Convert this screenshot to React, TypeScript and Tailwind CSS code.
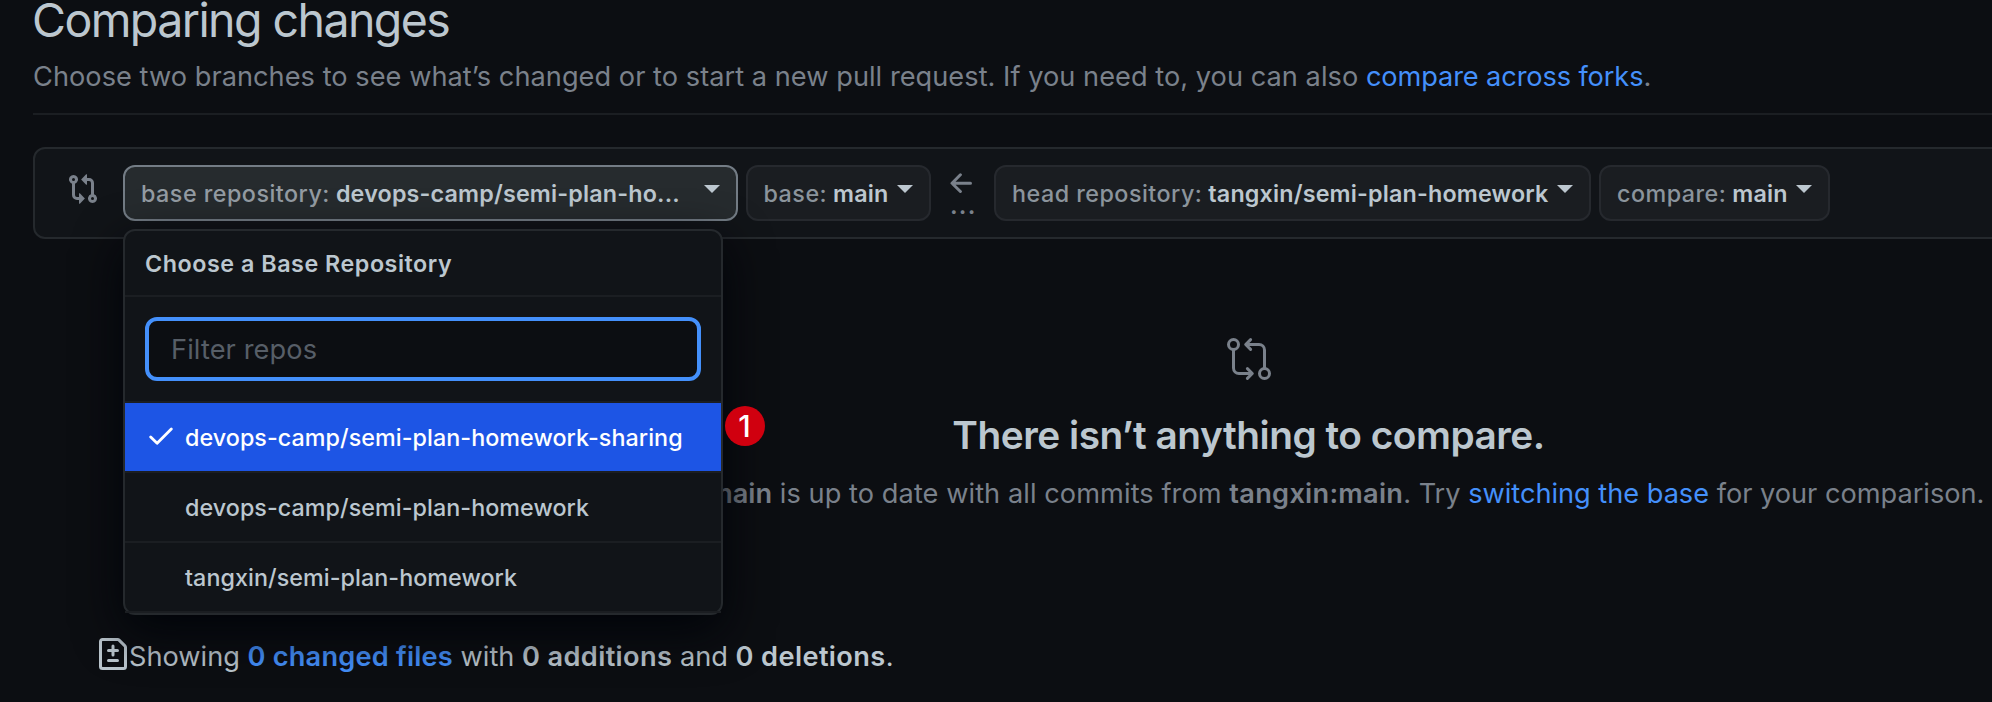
import React from "react";

type IconProps = { className?: string };

const CompareSmallIcon = ({ className }: IconProps) => (
  <svg viewBox="0 0 16 16" fill="currentColor" className={className}>
    <path d="M9.573.677A.25.25 0 0 1 10 .854V2.5h1A2.5 2.5 0 0 1 13.5 5v5.628a2.251 2.251 0 1 1-1.5 0V5a1 1 0 0 0-1-1h-1v1.646a.25.25 0 0 1-.427.177L7.177 3.427a.25.25 0 0 1 0-.354L9.573.677ZM6 12v-1.646a.25.25 0 0 1 .427-.177l2.396 2.396a.25.25 0 0 1 0 .354l-2.396 2.396A.25.25 0 0 1 6 15.146V13.5H5A2.5 2.5 0 0 1 2.5 11V5.372a2.25 2.25 0 1 1 1.5 0V11a1 1 0 0 0 1 1h1ZM4 3.25a.75.75 0 1 0-1.5 0 .75.75 0 0 0 1.5 0Zm9.5 9.5a.75.75 0 1 0-1.5 0 .75.75 0 0 0 1.5 0Z" />
  </svg>
);

const CompareLargeIcon = ({ className }: IconProps) => (
  <svg
    viewBox="0 0 24 24"
    fill="none"
    stroke="currentColor"
    strokeWidth="1.5"
    strokeLinecap="round"
    strokeLinejoin="round"
    className={className}
  >
    <circle cx="4.25" cy="4.75" r="2.5" />
    <circle cx="19.75" cy="19.25" r="2.5" />
    <path d="M4.25 7.25V16.5a2.75 2.75 0 0 0 2.75 2.75h6.3M11.2 16.8l2.45 2.45-2.45 2.45" />
    <path d="M19.75 16.75V7.5A2.75 2.75 0 0 0 17 4.75h-6.3M12.8 2.3l-2.45 2.45 2.45 2.45" />
  </svg>
);

const FileDiffIcon = ({ className }: IconProps) => (
  <svg viewBox="0 0 16 16" fill="currentColor" className={className}>
    <path d="M1 1.75C1 .784 1.784 0 2.75 0h7.586c.464 0 .909.184 1.237.513l2.914 2.914c.329.328.513.773.513 1.237v9.586A1.75 1.75 0 0 1 13.25 16H2.75A1.75 1.75 0 0 1 1 14.25Zm1.75-.25a.25.25 0 0 0-.25.25v12.5c0 .138.112.25.25.25h10.5a.25.25 0 0 0 .25-.25V4.664a.25.25 0 0 0-.073-.177l-2.914-2.914a.25.25 0 0 0-.177-.073ZM8 3.25a.75.75 0 0 1 .75.75v1.5h1.5a.75.75 0 0 1 0 1.5h-1.5v1.5a.75.75 0 0 1-1.5 0V7h-1.5a.75.75 0 0 1 0-1.5h1.5V4A.75.75 0 0 1 8 3.25Zm-3 8a.75.75 0 0 1 .75-.75h4.5a.75.75 0 0 1 0 1.5h-4.5a.75.75 0 0 1-.75-.75Z" />
  </svg>
);

const CheckIcon = ({ className }: IconProps) => (
  <svg viewBox="0 0 24 18" fill="none" stroke="currentColor" strokeWidth="2.8" strokeLinecap="round" strokeLinejoin="round" className={className}>
    <path d="M1.7 9.9l6.4 6.3L22.3 1.9" />
  </svg>
);

const ArrowLeftIcon = ({ className }: IconProps) => (
  <svg viewBox="0 0 22 20" fill="none" stroke="currentColor" strokeWidth="3" strokeLinecap="round" strokeLinejoin="round" className={className}>
    <path d="M20.5 10.2H2.2M10.4 1.8L2 10.2l8.4 8.3" />
  </svg>
);

const Caret = () => (
  <svg viewBox="0 0 16 8" fill="currentColor" className="-mt-2 h-2 w-4 shrink-0 text-[#bcc7cf]">
    <path d="M0 0h16L8 8z" />
  </svg>
);

type PickerProps = {
  label: string;
  value: string;
  className: string;
  labelClass?: string;
};

const Picker = ({ label, value, className, labelClass = "text-[#8b949c]" }: PickerProps) => (
  <button
    type="button"
    className={`flex h-14 shrink-0 items-center justify-between rounded-xl border-2 px-4 text-[23.3px] leading-6 whitespace-nowrap ${className}`}
  >
    <span className="pt-px">
      <span className={`mr-[6px] font-medium tracking-[0.49px] ${labelClass}`}>{label}</span>
      <span className="font-semibold tracking-[0.17px] text-[#bcc7cf]">{value}</span>
    </span>
    <Caret />
  </button>
);

const idle = "border-[#26292e] bg-[#1a1d21]";

const repos = [
  { name: "devops-camp/semi-plan-homework-sharing", selected: true },
  { name: "devops-camp/semi-plan-homework", selected: false },
  { name: "tangxin/semi-plan-homework", selected: false },
];

const RepoMenu = () => (
  <div className="absolute top-[80px] left-[88px] z-10 w-[600px] rounded-xl border-2 border-[#25292d] bg-[#111418] shadow-[0_16px_48px_#010409]">
    <div className="flex h-[66px] items-center border-b-2 border-[#1b1e22] px-5 pt-0.5 text-[23.3px] font-semibold tracking-[0.53px] text-[#bcc7cf]">
      Choose a Base Repository
    </div>
    <div className="border-b-2 border-[#1b1e22] p-5">
      <input
        placeholder="Filter repos"
        className="block h-16 w-full rounded-xl border-4 border-[#4490fb] bg-[#0c0e12] pr-4 pl-[22px] text-[27.2px] tracking-[0.1px] outline-none placeholder:text-[#575e67]"
      />
    </div>
    {repos.map((repo) => (
      <div
        key={repo.name}
        className={`flex h-[70px] items-center border-b-2 border-[#1b1e22] bg-clip-padding text-[23.3px] font-medium tracking-[0.06px] last:rounded-b-[10px] ${
          repo.selected ? "bg-[#1d55e5] text-white" : "text-[#bcc7cf]"
        }`}
      >
        <span className="flex w-[60px] shrink-0 pl-6">
          {repo.selected && <CheckIcon className="-mt-0.5 h-[18px] w-6" />}
        </span>
        <span className="pt-0.5">{repo.name}</span>
      </div>
    ))}
    <span className="absolute top-[175px] left-[599.5px] flex size-10 items-center justify-center rounded-full bg-[#d0000f] text-[30px] leading-none font-medium text-white">
      1
    </span>
  </div>
);

export default function App() {
  return (
    <div className="h-[702px] w-full overflow-hidden bg-[#0c0e12] pl-[33px] font-[Inter,sans-serif] text-[27.2px] text-[#bcc7cf]">
      <div className="w-[2431px]">
        <header className="h-[115px] border-b-2 border-[#1b1e22]">
          <h1 className="-ml-px text-[46.5px] leading-10 tracking-[-1.57px]">Comparing changes</h1>
          <p className="leading-[74px] tracking-[0.03px] whitespace-nowrap text-[#7a818b]">
            Choose two branches to see what’s changed or to start a new pull request. If you need to, you can also{" "}
            <a className="tracking-[-0.12px] text-[#4490fb]">compare across forks</a>.
          </p>
        </header>

        <section className="relative mt-8 flex h-[92px] items-start rounded-xl border-2 border-[#25292d] bg-[#111418] pt-4 pl-8">
          <CompareSmallIcon className="mt-2 mr-6 size-8 shrink-0 text-[#7a818b]" />
          <Picker
            label="base repository:"
            value="devops-camp/semi-plan-ho..."
            className="w-[614.5px] border-[#737c85] bg-[#262b2e]"
            labelClass="text-[#949ca3]"
          />
          <Picker label="base:" value="main" className={`ml-2 w-[185.5px] ${idle}`} />
          <div className="flex w-[63px] shrink-0 flex-col pt-2 pl-[19px] text-[#7a818b]">
            <ArrowLeftIcon className="h-5 w-[22px]" />
            <span className="pt-px text-[24px] leading-6 font-semibold tracking-[1.2px]">...</span>
          </div>
          <Picker label="head repository:" value="tangxin/semi-plan-homework" className={`w-[597px] ${idle}`} />
          <Picker label="compare:" value="main" className={`ml-2 w-[231px] ${idle}`} />
          <RepoMenu />
        </section>

        <section className="flex flex-col items-center pt-24">
          <CompareLargeIcon className="size-12 text-[#7a818b]" />
          <h2 className="mt-[22px] text-[38.8px] leading-[60px] font-semibold tracking-[-0.49px]">
            There isn’t anything to compare.
          </h2>
          <p className="mt-2 pl-[5px] leading-[42px] tracking-[-0.02px] whitespace-nowrap text-[#7a818b]">
            <b className="font-semibold">devops-camp:main</b>
            <span className="tracking-[0.06px]"> is up to date with all commits from </span>
            <b className="font-semibold tracking-[0.26px]">tangxin:main</b>. Try{" "}
            <a className="text-[#4490fb]">switching the base</a> for your comparison.
          </p>
        </section>

        <section className="mt-[120px] flex items-start pl-16 leading-[42px] whitespace-nowrap">
          <FileDiffIcon className="mt-[3px] size-8 shrink-0" />
          <span className="pt-px">
            Showing <b className="font-semibold tracking-[0.2px] text-[#4490fb]">0 changed files</b> with{" "}
            <b className="font-semibold tracking-[0.36px]">0 additions</b> and{" "}
            <b className="font-semibold tracking-[0.38px]">0 deletions</b>.
          </span>
        </section>
      </div>
    </div>
  );
}
